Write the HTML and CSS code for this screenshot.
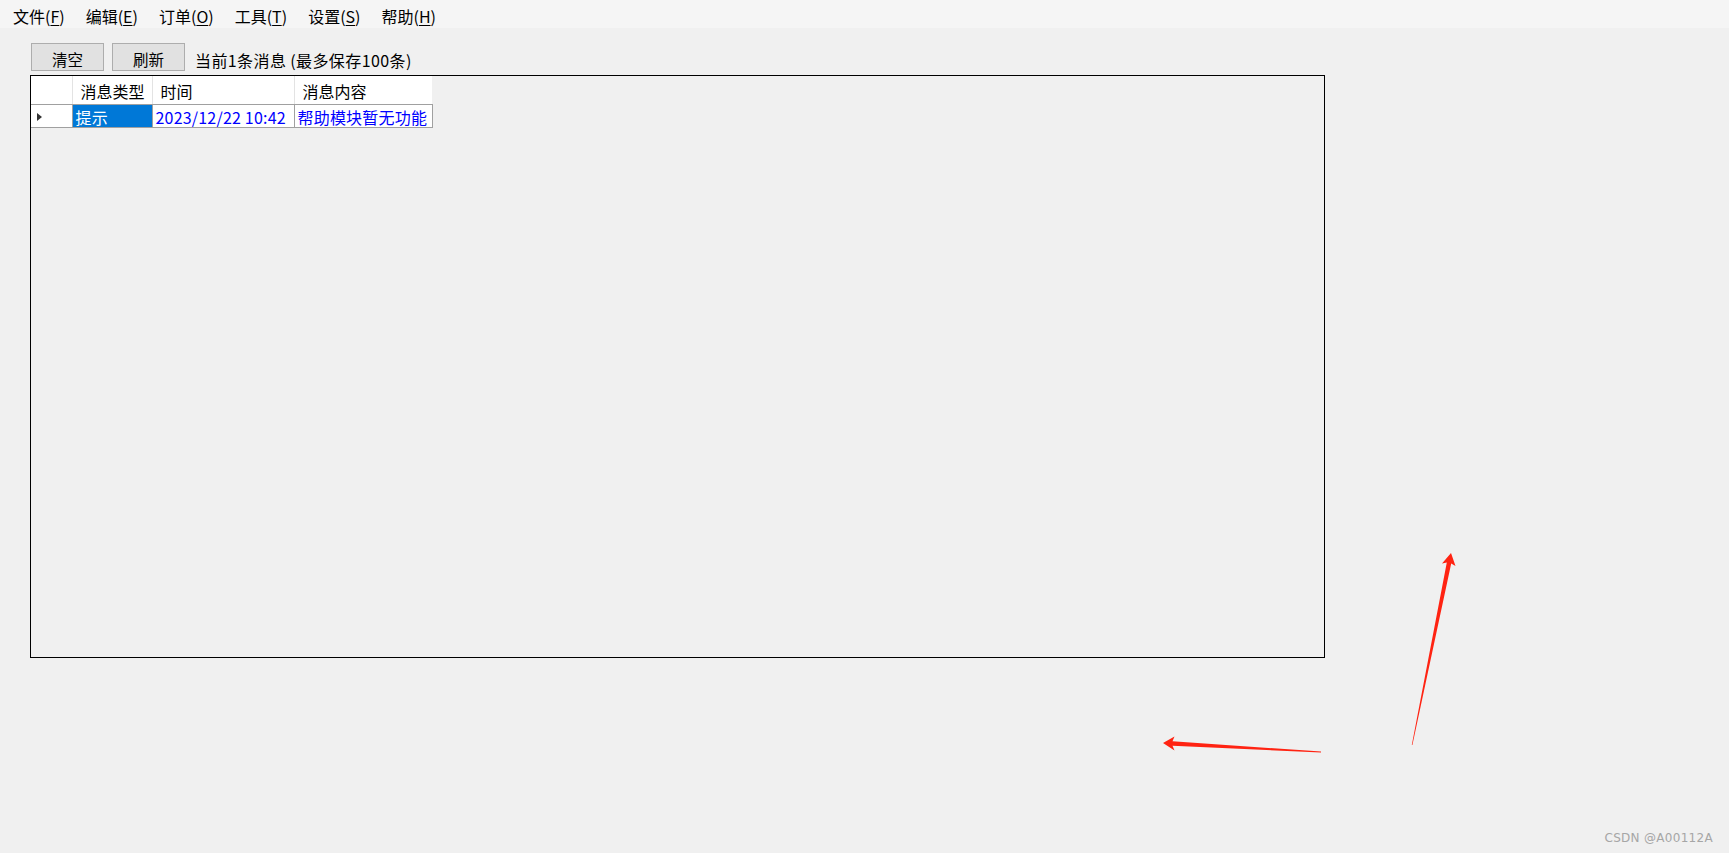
FILE: index.html
```html
<!DOCTYPE html>
<html lang="zh-CN">
<head>
  <meta charset="UTF-8">
  <meta name="viewport" content="width=device-width, initial-scale=1.0">
  <title>消息</title>
  <link rel="stylesheet" href="styles.css">
</head>
<body>
  <div class="menubar">
    <span class="menu">文件(<u>F</u>)</span>
    <span class="menu">编辑(<u>E</u>)</span>
    <span class="menu">订单(<u>O</u>)</span>
    <span class="menu">工具(<u>T</u>)</span>
    <span class="menu">设置(<u>S</u>)</span>
    <span class="menu">帮助(<u>H</u>)</span>
  </div>

  <div class="content">
    <div class="toolbar">
      <button class="btn" type="button">清空</button>
      <button class="btn" type="button">刷新</button>
      <span class="status">当前1条消息 (最多保存100条)</span>
    </div>

    <div class="grid">
      <table class="messages">
        <colgroup>
          <col class="c-head">
          <col class="c-type">
          <col class="c-time">
          <col class="c-text">
        </colgroup>
        <thead>
          <tr>
            <th class="rowhead"></th>
            <th>消息类型</th>
            <th>时间</th>
            <th>消息内容</th>
          </tr>
        </thead>
        <tbody>
          <tr>
            <td class="rowhead"><span class="pointer"></span></td>
            <td class="selected">提示</td>
            <td>2023/12/22 10:42</td>
            <td>帮助模块暂无功能</td>
          </tr>
        </tbody>
      </table>
    </div>
  </div>

  <svg class="marks" width="1729" height="853" viewBox="0 0 1729 853">
    <polygon fill="#ff2312" points="1163,743 1174.5,736.5 1172.5,741.2 1321,751.6 1321,752.4 1172.5,745.8 1174.5,750.5"/>
    <polygon fill="#ff2312" points="1451,553 1455.5,566 1451.2,563.5 1412.4,745 1411.8,745 1446.8,562.5 1442,563.5"/>
  </svg>

  <div class="watermark">CSDN @A00112A</div>
</body>
</html>
```

FILE: styles.css
```css
* { box-sizing: border-box; }

body {
  margin: 0;
  height: 853px;
  background: #f0f0f0;
  font-family: "Noto Sans CJK SC", "Microsoft YaHei", sans-serif;
  font-size: 16px;
  line-height: 20px;
  color: #000;
  overflow: hidden;
}

.menubar {
  height: 28px;
  background: #f5f5f5;
  display: flex;
  align-items: flex-start;
  padding: 6px 0 0 13px;
  gap: 21px;
}

.menu u {
  text-underline-offset: 2px;
}

.content {
  padding: 15px 0 0 30px;
}

.toolbar {
  display: flex;
  align-items: flex-start;
  height: 28px;
  margin-left: 1px;
  margin-bottom: 4px;
}

.btn {
  width: 73px;
  height: 28px;
  margin: 0 8px 0 0;
  padding: 3px 0 0;
  background: #e1e1e1;
  border: 1px solid #adadad;
  font: inherit;
  font-size: 15.5px;
  color: #000;
}

.status {
  margin-left: 2px;
  padding-top: 7px;
  letter-spacing: 0.4px;
}

.grid {
  width: 1295px;
  height: 583px;
  border: 1px solid #000;
  background: #f0f0f0;
}

.messages {
  border-collapse: collapse;
  table-layout: fixed;
  width: 401px;
}

.c-head { width: 41px; }
.c-type { width: 80px; }
.c-time { width: 142px; }
.c-text { width: 138px; }

.messages th {
  height: 28px;
  padding: 5px 0 3px 8px;
  background: #fff;
  font-weight: normal;
  text-align: left;
  vertical-align: top;
  border-left: 1px solid #e3e3e3;
  border-bottom: 1px solid #a0a0a0;
  white-space: nowrap;
}

.messages th.rowhead {
  border-left: none;
}

.messages td {
  height: 23px;
  padding: 2px 0 0 3px;
  background: #fff;
  color: #0000ff;
  vertical-align: top;
  border: 1px solid #a0a0a0;
  white-space: nowrap;
  overflow: hidden;
  letter-spacing: 0.2px;
}

.messages td.rowhead {
  border-left: none;
  padding: 8px 0 0 6px;
}

.messages td.selected {
  background: #0078d7;
  color: #fff;
}

.pointer {
  display: block;
  width: 0;
  height: 0;
  border-top: 4px solid transparent;
  border-bottom: 4px solid transparent;
  border-left: 5px solid #333;
}

.marks {
  position: absolute;
  left: 0;
  top: 0;
  pointer-events: none;
}

.watermark {
  position: absolute;
  right: 16px;
  bottom: 7px;
  font-family: "DejaVu Sans", sans-serif;
  font-size: 12px;
  line-height: 16px;
  color: #a6a6a6;
  letter-spacing: 0.3px;
}
```
